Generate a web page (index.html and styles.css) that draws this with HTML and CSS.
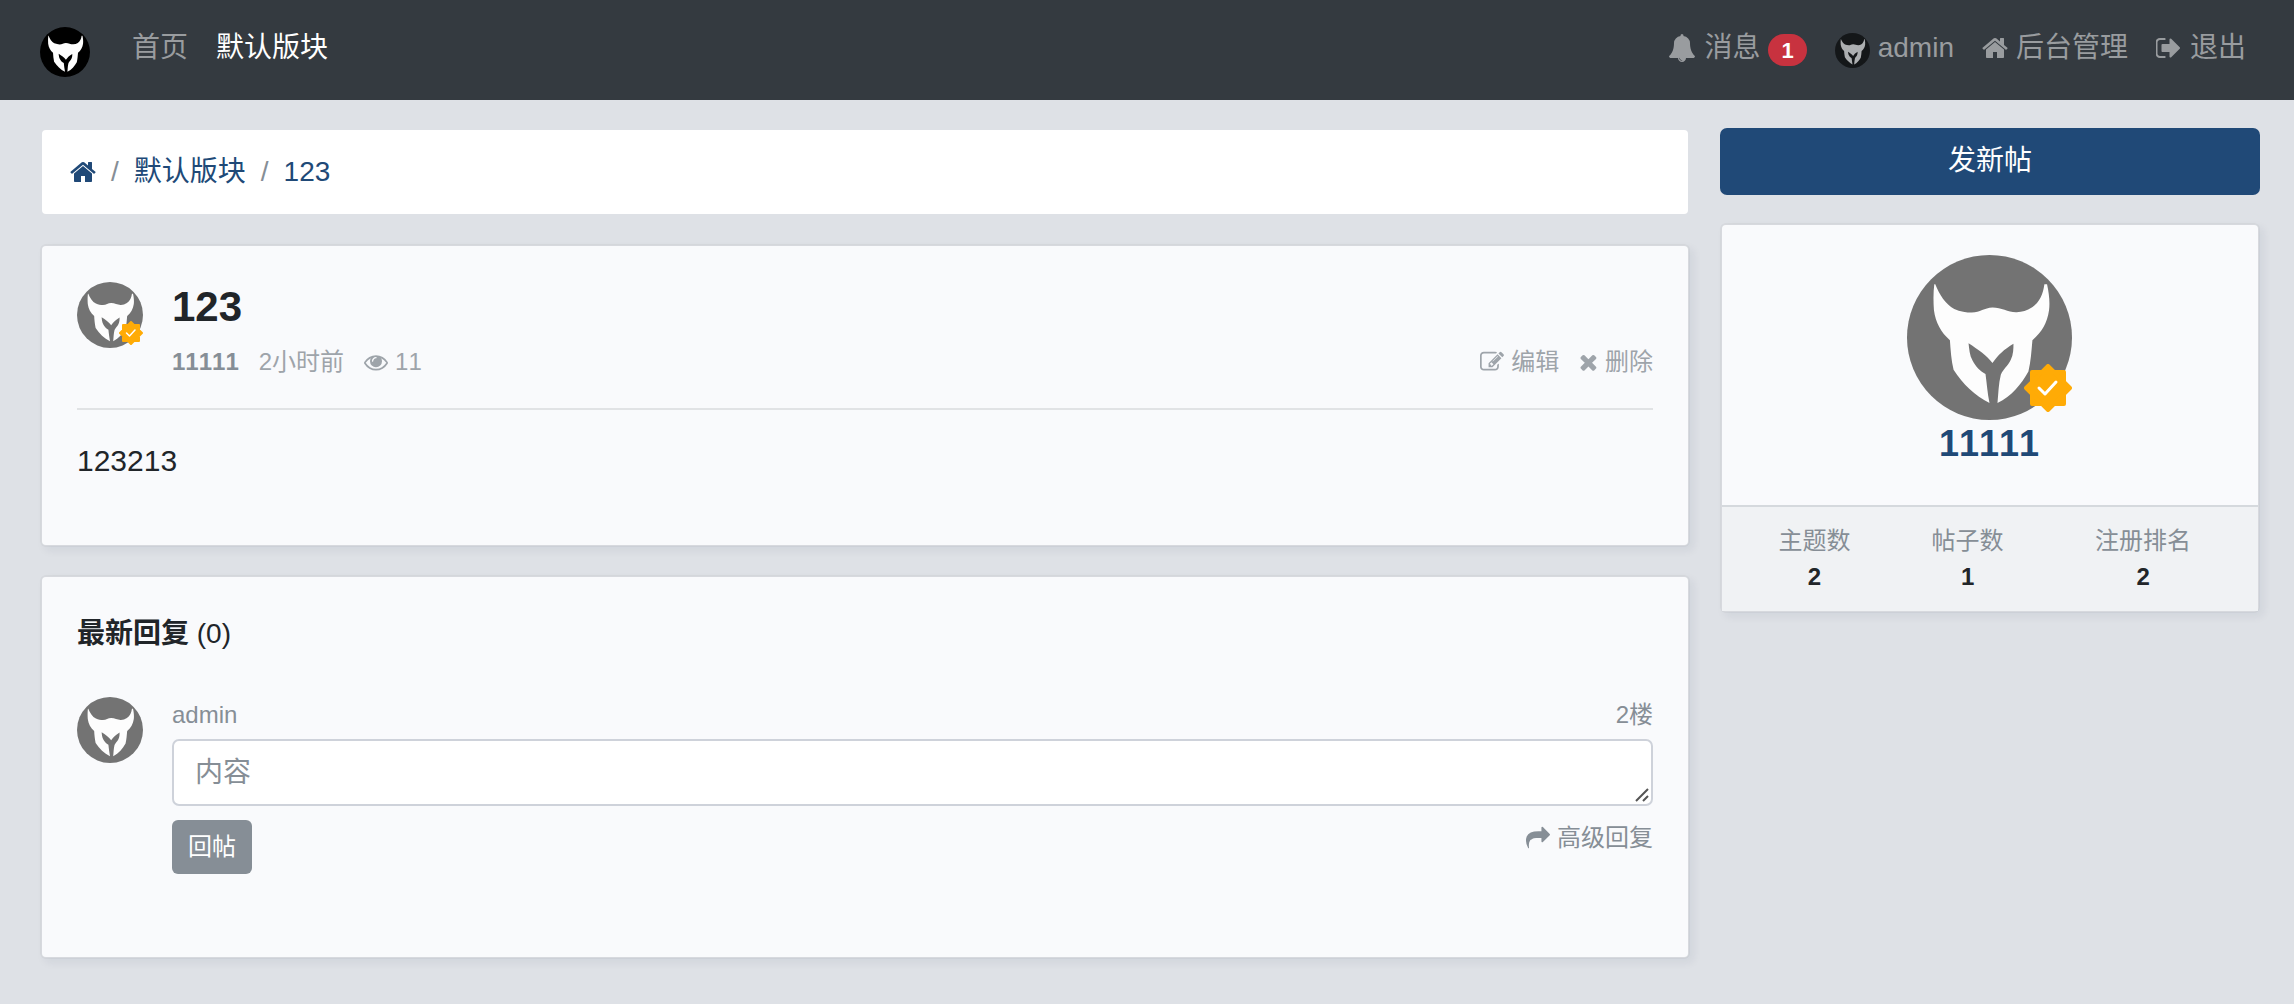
FILE: index.html
```
<!DOCTYPE html>
<html lang="zh-CN">
<head>
    <meta charset="utf-8">
    <title>123</title>
    <link rel="stylesheet" href="styles.css">
</head>
<body>
    <!-- Shared shapes -->
    <svg class="sprite" aria-hidden="true">
        <symbol id="helmet" viewBox="0 0 496 496">
            <circle cx="248" cy="248" r="248" fill="currentColor"/>
            <path class="helmet-face" d="M85 88C97 118 116 149 142 162C160 170 178 173 195 173C220 173 232 159 257 158C285 158 304 173 330 172C346 172 361 167 375 158C399 142 409 118 413 88H421C427 116 430 143 427 166C421 205 406 231 377 256C374 290 372 320 365 350C343 389 315 424 272 445C275 416 275 388 282 360C290 342 303 334 312 315C320 299 320 282 320 267C293 283 273 301 257 325C239 301 214 284 185 265C187 282 188 301 197 317C207 336 219 348 236 358C240 387 242 416 248 445C204 423 168 388 140 345C133 315 131 285 129 256C102 232 86 203 81 166C79 140 79 112 82 88Z"/>
        </symbol>
        <symbol id="verified" viewBox="0 0 48 48">
            <path d="M8 8H40V40H8ZM24 2L46 24L24 46L2 24Z" fill="#ffab06" stroke="#ffab06" stroke-width="4" stroke-linejoin="round"/>
            <path d="M15 24L21 30L32 18" fill="none" stroke="#fff" stroke-width="3" stroke-linecap="round" stroke-linejoin="round"/>
        </symbol>
        <symbol id="home" viewBox="64 0 1664 1792">
            <path d="M1472 992v480q0 26-19 45t-45 19h-384v-384h-256v384h-384q-26 0-45-19t-19-45v-480q0-1 .5-3t.5-3l575-474 575 474q1 2 1 6zm223-69l-62 74q-8 9-21 11h-3q-13 0-21-7l-692-577-692 577q-12 8-24 7-13-2-21-11l-62-74q-8-10-7-23.5t11-21.5l719-599q32-26 76-26t76 26l244 204v-195q0-14 9-23t23-9h192q14 0 23 9t9 23v408l219 182q10 8 11 21.5t-7 23.5z"/>
        </symbol>
    </svg>

    <header class="header">
        <a class="logo" href="#" aria-label="首页"><svg class="helmet"><use href="#helmet"/></svg></a>
        <nav class="nav">
            <a href="#">首页</a>
            <a class="active" href="#">默认版块</a>
        </nav>
        <nav class="nav user-nav">
            <a href="#">
                <svg class="icon" viewBox="0 0 1792 1792"><path d="M912 1696q0-16-16-16-59 0-101.5-42.5t-42.5-101.5q0-16-16-16t-16 16q0 73 51.5 124.5t124.5 51.5q16 0 16-16zm816-288q0 52-38 90t-90 38h-448q0 106-75 181t-181 75-181-75-75-181h-448q-52 0-90-38t-38-90q50-42 91-88t85-119.5 74.5-158.5 50-206 19.5-260q0-152 117-282.5t307-158.5q-8-19-8-39 0-40 28-68t68-28 68 28 28 68q0 20-8 39 190 28 307 158.5t117 282.5q0 139 19.5 260t50 206 74.5 158.5 85 119.5 91 88z"/></svg>
                消息
                <span class="badge">1</span>
            </a>
            <a href="#"><svg class="helmet nav-avatar"><use href="#helmet"/></svg>admin</a>
            <a href="#"><svg class="icon icon-home"><use href="#home"/></svg>后台管理</a>
            <a href="#">
                <svg class="icon" viewBox="96 0 1664 1792"><path d="M704 1440q0 4 1 20t.5 26.5-3 23.5-10 19.5-20.5 6.5h-320q-119 0-203.5-84.5t-84.5-203.5v-704q0-119 84.5-203.5t203.5-84.5h320q13 0 22.5 9.5t9.5 22.5q0 4 1 20t.5 26.5-3 23.5-10 19.5-20.5 6.5h-320q-66 0-113 47t-47 113v704q0 66 47 113t113 47h312l11.5 1 11.5 3 8 5.5 7 9 2 13.5zm928-544q0 26-19 45l-544 544q-19 19-45 19t-45-19-19-45v-288h-448q-26 0-45-19t-19-45v-384q0-26 19-45t45-19h448v-288q0-26 19-45t45-19 45 19l544 544q19 19 19 45z"/></svg>
                退出
            </a>
        </nav>
    </header>

    <div class="container">
        <main class="column">
            <nav class="breadcrumb">
                <a href="#" aria-label="首页"><svg class="icon icon-home"><use href="#home"/></svg></a>
                <span>/</span>
                <a href="#">默认版块</a>
                <span>/</span>
                <a href="#">123</a>
            </nav>

            <article class="card">
                <div class="media">
                    <div class="avatar">
                        <svg class="helmet"><use href="#helmet"/></svg>
                        <svg class="verified"><use href="#verified"/></svg>
                    </div>
                    <div class="media-body">
                        <h1 class="title">123</h1>
                        <div class="meta">
                            <a class="author" href="#">11111</a>
                            <span>2小时前</span>
                            <span class="with-icon"><svg class="icon" viewBox="0 0 1792 1792"><path d="M1664 960q-152-236-381-353 61 104 61 225 0 185-131.5 316.5t-316.5 131.5-316.5-131.5-131.5-316.5q0-121 61-225-229 117-381 353 133 205 333.5 326.5t434.5 121.5 434.5-121.5 333.5-326.5zm-720-384q0-20-14-34t-34-14q-125 0-214.5 89.5t-89.5 214.5q0 20 14 34t34 14 34-14 14-34q0-86 61-147t147-61q20 0 34-14t14-34zm848 384q0 34-20 69-140 230-376.5 368.5t-499.5 138.5-499.5-139-376.5-368q-20-35-20-69t20-69q140-229 376.5-368t499.5-139 499.5 139 376.5 368q20 35 20 69z"/></svg>11</span>
                            <div class="actions">
                                <a class="with-icon" href="#"><svg class="icon" viewBox="0 0 1792 1792"><path d="M888 1184l116-116-152-152-116 116v56h96v96h56zm440-720q-16-16-33 1l-350 350q-17 17-1 33t33-1l350-350q17-17 1-33zm80 594v190q0 119-84.5 203.5t-203.5 84.5h-832q-119 0-203.5-84.5t-84.5-203.5v-832q0-119 84.5-203.5t203.5-84.5h832q63 0 117 25 15 7 18 23 3 17-9 29l-49 49q-14 14-32 8-23-6-45-6h-832q-66 0-113 47t-47 113v832q0 66 47 113t113 47h832q66 0 113-47t47-113v-126q0-13 9-22l64-64q15-15 35-7t20 29zm-96-738l288 288-672 672h-288v-288zm444 132l-92 92-288-288 92-92q28-28 68-28t68 28l152 152q28 28 28 68t-28 68z"/></svg>编辑</a>
                                <a class="with-icon" href="#"><svg class="icon" viewBox="192 0 1408 1792"><path d="M1490 1322q0 40-28 68l-136 136q-28 28-68 28t-68-28l-294-294-294 294q-28 28-68 28t-68-28l-136-136q-28-28-28-68t28-68l294-294-294-294q-28-28-28-68t28-68l136-136q28-28 68-28t68 28l294 294 294-294q28-28 68-28t68 28l136 136q28 28 28 68t-28 68l-294 294 294 294q28 28 28 68z"/></svg>删除</a>
                            </div>
                        </div>
                    </div>
                </div>
                <hr>
                <p class="message">123213</p>
            </article>

            <section class="card replies">
                <h2 class="card-title"><b>最新回复</b> (0)</h2>
                <div class="media">
                    <div class="avatar"><svg class="helmet"><use href="#helmet"/></svg></div>
                    <form class="media-body">
                        <div class="reply-head">
                            <label for="message">admin</label>
                            <span>2楼</span>
                        </div>
                        <div class="reply-box">
                            <textarea id="message" placeholder="内容"></textarea>
                            <svg class="grip" viewBox="0 0 14 14"><path d="M1 13L13 1M8 13L13 8"/></svg>
                        </div>
                        <div class="reply-foot">
                            <button class="btn-reply" type="button">回帖</button>
                            <a class="with-icon" href="#"><svg class="icon" viewBox="0 0 1792 1792"><path d="M1792 640q0 26-19 45l-512 512q-19 19-45 19t-45-19-19-45v-256h-224q-98 0-175.5 6t-154 21.5-133 42.5-105.5 69.5-80 101-48.5 138.5-17.5 181q0 55 5 123 0 6 2.5 23.5t2.5 26.5q0 15-8.5 25t-23.5 10q-16 0-28-17-7-9-13-22t-13.5-30-10.5-24q-127-285-127-451 0-199 53-333 162-403 875-403h224v-256q0-26 19-45t45-19 45 19l512 512q19 19 19 45z"/></svg>高级回复</a>
                        </div>
                    </form>
                </div>
            </section>
        </main>

        <aside class="column">
            <button class="btn-new" type="button">发新帖</button>
            <div class="card profile">
                <div class="profile-body">
                    <div class="avatar avatar-lg">
                        <svg class="helmet"><use href="#helmet"/></svg>
                        <svg class="verified"><use href="#verified"/></svg>
                    </div>
                    <a class="profile-name" href="#">11111</a>
                </div>
                <div class="profile-stats">
                    <table>
                        <tr><th>主题数</th><th>帖子数</th><th>注册排名</th></tr>
                        <tr><td>2</td><td>1</td><td>2</td></tr>
                    </table>
                </div>
            </div>
        </aside>
    </div>
</body>
</html>
```
FILE: styles.css
```
* {
    box-sizing: border-box;
}

body {
    margin: 0;
    background-color: #dee1e6;
    color: #212529;
    font-family: "Liberation Sans", "Noto Sans CJK SC", sans-serif;
    font-size: 28px;
    font-kerning: none;
    line-height: 42px;
}

a {
    color: inherit;
    text-decoration: none;
}

button,
textarea {
    font: inherit;
}

/* Icons */
.sprite {
    position: absolute;
    width: 0;
    height: 0;
}

.icon {
    flex: none;
    height: 1em;
    fill: currentColor;
}

.icon-home {
    width: 26px;
}

.helmet {
    display: block;
    width: 100%;
    height: 100%;
}

.helmet-face {
    fill: #fdfdfd;
}

/* Header */
.header {
    display: flex;
    align-items: center;
    height: 100px;
    padding: 0 48px 0 40px;
    background-color: #343a40;
}

.logo {
    width: 50px;
    height: 50px;
    margin: 4px 42px 0 0;
    color: #000;
}

.nav {
    display: flex;
    gap: 28px;
    padding-bottom: 4px;
    color: #999c9f;
}

.nav a {
    display: flex;
    align-items: center;
    gap: 8px;
}

.nav .active {
    color: #fff;
}

.user-nav {
    margin-left: auto;
}

.badge {
    padding: 2px 13px 0;
    border-radius: 16px;
    background-color: #c8323f;
    color: #fff;
    font-size: 22px;
    font-weight: bold;
    line-height: 30px;
    margin-top: 4px;
}

.nav-avatar {
    width: 35px;
    height: 35px;
    margin-top: 4px;
    color: #000;
    opacity: .6;
}

/* Page columns */
.container {
    display: grid;
    grid-template-columns: minmax(0, 1fr) 540px;
    align-items: start;
    gap: 30px;
    padding: 28px 34px 28px 40px;
}

.column {
    display: flex;
    flex-direction: column;
    gap: 28px;
}

.breadcrumb {
    display: flex;
    align-items: center;
    gap: 15px;
    padding: 21px 28px;
    border: 2px solid transparent;
    border-radius: 6px;
    background-color: #fff;
    background-clip: padding-box;
    color: #868e96;
}

.breadcrumb a {
    display: flex;
    color: #204977;
}

.card {
    padding: 36px 35px 34px;
    border: 2px solid rgba(0, 0, 0, .03);
    border-radius: 6px;
    background-color: #f9fafc;
    background-clip: padding-box;
    box-shadow: 4px 4px 8px rgba(0, 40, 60, .06);
}

.media {
    display: flex;
    gap: 29px;
}

.media-body {
    flex: 1;
    min-width: 0;
}

.avatar {
    position: relative;
    flex: none;
    width: 66px;
    height: 66px;
    color: #737373;
}

.verified {
    position: absolute;
    right: 0;
    bottom: 5%;
    width: 24px;
    height: 24px;
}

/* Thread */
.title {
    margin: 0 0 12px;
    font-size: 42px;
    line-height: 50px;
}

.meta {
    display: flex;
    gap: 20px;
    color: #9ea4aa;
    font-size: 24px;
    line-height: 36px;
}

.author {
    color: #868e96;
    font-weight: bold;
}

.with-icon {
    display: flex;
    align-items: center;
    gap: 7px;
}

.actions {
    display: flex;
    gap: 20px;
    margin-left: auto;
}

hr {
    margin: 28px 0;
    border: 0;
    border-top: 2px solid #e1e3e5;
}

.message {
    margin: 0 0 28px;
    font-size: 30px;
    line-height: 45px;
}

/* Replies */
.replies {
    padding-bottom: 83px;
}

.card-title {
    margin: 0 0 42px;
    font-size: 28px;
    font-weight: normal;
}

.reply-head,
.reply-foot {
    display: flex;
    justify-content: space-between;
    color: #868e96;
    font-size: 24px;
    line-height: 36px;
}

.reply-box {
    position: relative;
    margin: 6px 0 14px;
}

.reply-box textarea {
    display: block;
    width: 100%;
    height: 67px;
    padding: 11px 21px 10px;
    border: 2px solid #ced2da;
    border-radius: 7px;
    background-color: #fff;
    overflow: hidden;
    resize: none;
}

.reply-box textarea::placeholder {
    color: #868e96;
}

.grip {
    position: absolute;
    right: 4px;
    bottom: 4px;
    width: 14px;
    height: 14px;
    fill: none;
    stroke: #555;
    stroke-width: 2;
}

.reply-foot {
    align-items: flex-start;
}

.btn-reply {
    height: 54px;
    padding: 0 16px;
    border: 0;
    border-radius: 6px;
    background-color: #868e96;
    color: #fff;
}

/* Sidebar */
.btn-new {
    height: 67px;
    padding: 0 28px 2px;
    border: 0;
    border-radius: 7px;
    background-color: #204977;
    color: #fff;
}

.profile {
    padding: 0;
}

.profile-body {
    display: flex;
    flex-direction: column;
    align-items: center;
    padding: 30px 30px 38px 28px;
}

.avatar-lg {
    width: 165px;
    height: 165px;
}

.avatar-lg .verified {
    width: 48px;
    height: 48px;
}

.profile-name {
    color: #204977;
    font-size: 36px;
    font-weight: bold;
    line-height: 47px;
}

.profile-stats {
    padding: 16px;
    border-top: 2px solid #d5d9dd;
    background-color: #f0f2f4;
    font-size: 24px;
    line-height: 36px;
    text-align: center;
}

.profile-stats table {
    width: 100%;
    border-collapse: collapse;
}

.profile-stats th {
    padding: 0 5px;
    color: #868e96;
    font-weight: normal;
}

.profile-stats td {
    padding: 0 5px;
    font-weight: bold;
}
```
